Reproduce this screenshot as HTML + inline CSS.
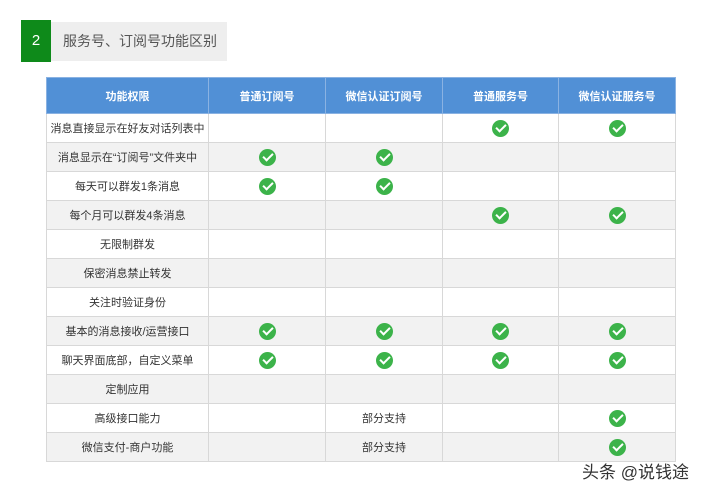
<!DOCTYPE html><html><head><meta charset="utf-8"><style>
body{margin:0;width:707px;height:492px;background:#fff;position:relative;font-family:"Liberation Sans","Noto Sans CJK SC",sans-serif;overflow:hidden}
.g{position:absolute;left:21px;top:20px;width:30px;height:42px;background:#0e8a1a;color:#fff;font-size:15px;line-height:42px;text-align:center}
.t{position:absolute;left:51px;top:22px;width:176px;height:39px;background:#eee;color:#555;font-size:14px;line-height:39px;padding-left:12px;box-sizing:border-box}
table{position:absolute;left:46px;top:77px;border-collapse:collapse;border:1px solid #ddd;table-layout:fixed;width:629px}
td,th{border:1px solid #d8d8d8;font-size:11px;color:#333;text-align:center;padding:0;height:28px;white-space:nowrap;overflow:hidden}
th{background:#5190d6;color:#fff;height:35px;font-weight:bold;border-color:#8ab2e2}
tr:nth-child(odd) td{background:#f2f2f2}
.c{display:inline-block;width:17px;height:17px;border-radius:50%;background:#3cb34a;vertical-align:middle;position:relative}
.c::after{content:"";position:absolute;left:4px;top:4px;width:8px;height:4px;border-left:2.5px solid #fff;border-bottom:2.5px solid #fff;transform:rotate(-45deg)}
.w{position:absolute;left:582px;top:458px;font-size:17px;color:#333}
</style></head><body>
<div class="g">2</div><div class="t">服务号、订阅号功能区别</div>
<table>
<colgroup><col style="width:162px"><col style="width:117px"><col style="width:117px"><col style="width:116px"><col style="width:117px"></colgroup>
<tr><th>功能权限</th><th>普通订阅号</th><th>微信认证订阅号</th><th>普通服务号</th><th>微信认证服务号</th></tr>
<tr><td>消息直接显示在好友对话列表中</td><td></td><td></td><td><span class="c"></span></td><td><span class="c"></span></td></tr>
<tr><td>消息显示在“订阅号”文件夹中</td><td><span class="c"></span></td><td><span class="c"></span></td><td></td><td></td></tr>
<tr><td>每天可以群发1条消息</td><td><span class="c"></span></td><td><span class="c"></span></td><td></td><td></td></tr>
<tr><td>每个月可以群发4条消息</td><td></td><td></td><td><span class="c"></span></td><td><span class="c"></span></td></tr>
<tr><td>无限制群发</td><td></td><td></td><td></td><td></td></tr>
<tr><td>保密消息禁止转发</td><td></td><td></td><td></td><td></td></tr>
<tr><td>关注时验证身份</td><td></td><td></td><td></td><td></td></tr>
<tr><td>基本的消息接收/运营接口</td><td><span class="c"></span></td><td><span class="c"></span></td><td><span class="c"></span></td><td><span class="c"></span></td></tr>
<tr><td>聊天界面底部，自定义菜单</td><td><span class="c"></span></td><td><span class="c"></span></td><td><span class="c"></span></td><td><span class="c"></span></td></tr>
<tr><td>定制应用</td><td></td><td></td><td></td><td></td></tr>
<tr><td>高级接口能力</td><td></td><td>部分支持</td><td></td><td><span class="c"></span></td></tr>
<tr><td>微信支付-商户功能</td><td></td><td>部分支持</td><td></td><td><span class="c"></span></td></tr>
</table>
<div class="w">头条 @说钱途</div>
</body></html>
